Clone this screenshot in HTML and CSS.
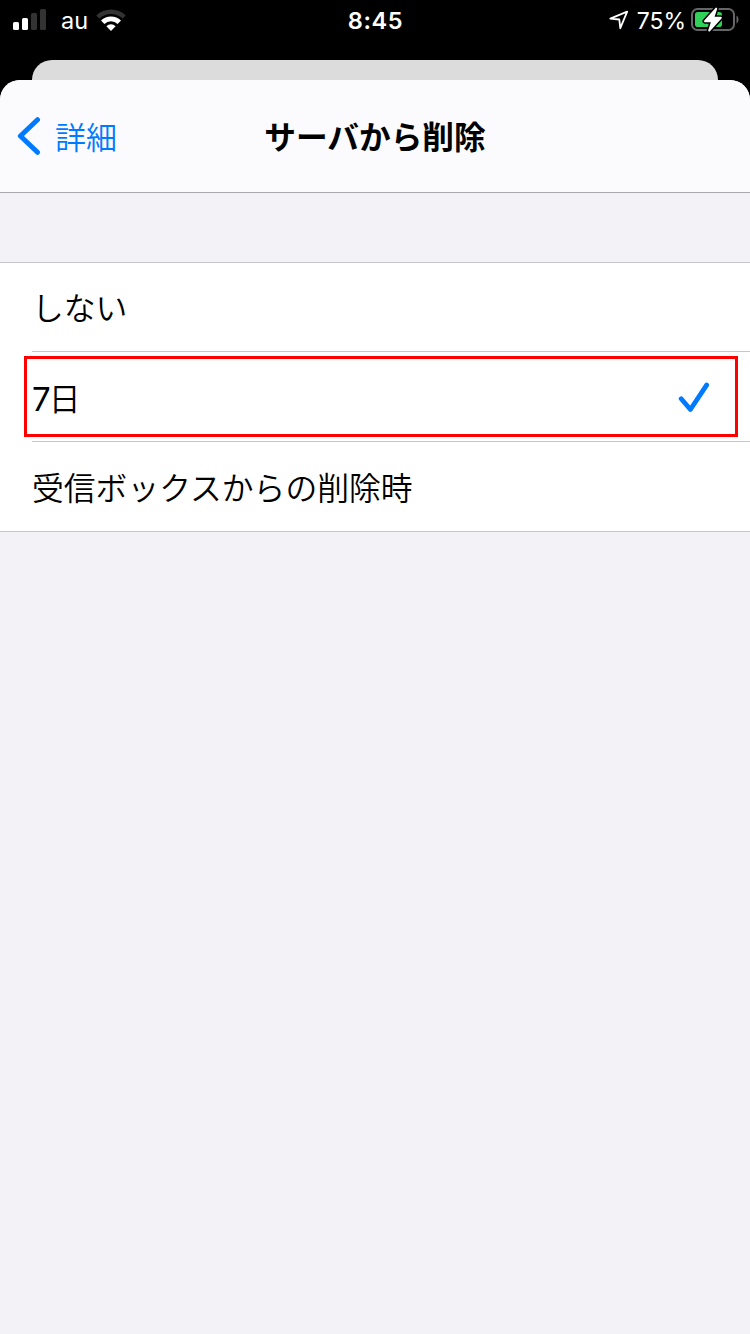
FILE: index.html
```html
<!DOCTYPE html>
<html lang="ja">
  <head>
    <meta charset="UTF-8" />
    <meta name="viewport" content="width=device-width, initial-scale=1.0" />
    <title>サーバから削除</title>
    <link rel="stylesheet" href="styles.css">
  </head>
  <body>
    <div class="status-bar">
      <div class="status-left">
        <svg class="signal" width="34" height="22" viewBox="0 0 34 22">
          <rect x="0" y="13" width="6" height="8" rx="1.5" fill="#fff" />
          <rect x="9" y="9" width="6" height="12" rx="1.5" fill="#fff" />
          <rect x="18" y="4" width="6" height="17" rx="1.5" fill="#333" />
          <rect x="27" y="0" width="6" height="21" rx="1.5" fill="#333" />
        </svg>
        <span class="carrier">au</span>
        <svg class="wifi" width="30" height="22" viewBox="0 0 30 22">
          <path d="M0.3 6.4a21.5 21.5 0 0 1 29.4 0L26.6 9.5a17 17 0 0 0-23.2 0z" fill="#333" />
          <path d="M5 11.5a14.6 14.6 0 0 1 20 0L21.6 14.9a9.6 9.6 0 0 0-13.2 0z" fill="#fff" />
          <path d="M10.4 17.2a6.6 6.6 0 0 1 9.2 0L15 22z" fill="#fff" />
        </svg>
      </div>
      <div class="time">8:45</div>
      <div class="status-right">
        <svg class="location" width="20" height="20" viewBox="0 0 20 20">
          <path d="M1.3 8.7L18.2 1.6L11.3 18.2L10.3 9.5z" fill="none" stroke="#fff" stroke-width="1.8" stroke-linejoin="round" />
        </svg>
        <span class="percent">75%</span>
        <svg class="battery" width="48" height="26" viewBox="0 0 48 26">
          <rect x="1" y="2" width="42" height="21" rx="5.5" fill="none" stroke="#666" stroke-width="2" />
          <path d="M45.5 8.5c2.6 1.2 2.6 6.8 0 8z" fill="#666" />
          <rect x="4" y="5" width="27" height="15" rx="2.8" fill="#30d158" />
          <path d="M25.2 1.6L14 14.2h7.2L18.2 23.6L29.8 10.8h-7.6z" fill="#fff" stroke="#000" stroke-width="5" paint-order="stroke" stroke-linejoin="round" />
          <path d="M25.2 1.6L14 14.2h7.2L18.2 23.6L29.8 10.8h-7.6z" fill="#fff" stroke="#fff" stroke-width="2" stroke-linejoin="round" />
        </svg>
      </div>
    </div>

    <div class="back-sheet"></div>

    <div class="sheet">
      <div class="navbar">
        <a class="back">
          <svg width="24" height="40" viewBox="0 0 24 40">
            <path d="M20.5 3.7L3.4 20L20.5 36.3" fill="none" stroke="#007aff" stroke-width="5" stroke-linecap="round" stroke-linejoin="round" />
          </svg>
          <span class="back-label">詳細</span>
        </a>
        <h1>サーバから削除</h1>
      </div>

      <ul class="options">
        <li class="option"><span class="label">しない</span></li>
        <li class="option selected">
          <span class="label"><span class="number">7</span>日</span>
          <svg class="check" width="32" height="32" viewBox="0 0 32 32">
            <path d="M3.2 17.8L12.4 28.5L28.6 4.1" fill="none" stroke="#007aff" stroke-width="4.8" stroke-linecap="round" stroke-linejoin="round" />
          </svg>
          <div class="highlight"></div>
        </li>
        <li class="option"><span class="label">受信ボックスからの削除時</span></li>
      </ul>
    </div>
  </body>
</html>
```
FILE: styles.css
```css
* {
  box-sizing: border-box;
}

body {
  margin: 0;
  height: 1334px;
  display: flex;
  flex-direction: column;
  background-color: #000;
  color: #000;
  font-family: Inter, "Noto Sans CJK JP", sans-serif;
  overflow: hidden;
}

.status-bar {
  display: grid;
  grid-template-columns: 1fr auto 1fr;
  height: 60px;
  padding: 1px 12px 19px 13px;
  align-items: center;
  color: #fff;
  font-size: 24px;
  line-height: 40px;
}

.status-left,
.status-right {
  display: flex;
  align-items: center;
}

.signal {
  margin-bottom: 2px;
}

.carrier {
  margin-left: 14px;
  font-size: 23.5px;
}

.wifi {
  margin: 0 0 2px 8px;
}

.time {
  font-size: 23.5px;
  font-weight: 600;
  letter-spacing: 0.6px;
}

.status-right {
  justify-content: flex-end;
}

.location {
  margin-bottom: 2px;
}

.percent {
  margin: 0 5px 0 8px;
  font-size: 23px;
}

.battery {
  margin: 0 -1px 3px 0;
}

.back-sheet {
  height: 20px;
  margin: 0 32px;
  border-radius: 20px 20px 0 0;
  background-color: #dcdcdc;
}

.sheet {
  flex: 1;
  border-radius: 20px 20px 0 0;
  background-color: #f2f2f7;
  overflow: hidden;
}

.navbar {
  display: grid;
  grid-template-columns: 1fr auto 1fr;
  align-items: center;
  height: 113px;
  padding: 0 17px;
  background-color: #fbfbfd;
  border-bottom: 1px solid #a9a9ad;
}

.back {
  display: flex;
  align-items: center;
  gap: 14px;
  color: #007aff;
  font-size: 31px;
  font-weight: 350;
}

.back-label {
  padding-bottom: 2px;
}

h1 {
  margin: 0;
  padding-bottom: 3px;
  font-size: 31.7px;
  font-weight: 700;
}

.options {
  list-style: none;
  margin: 69px 0 0;
  padding: 0 0 0 32px;
  background-color: #fff;
  border-top: 1px solid #c7c7cb;
  border-bottom: 1px solid #c7c7cb;
}

.option {
  position: relative;
  display: flex;
  align-items: center;
  justify-content: space-between;
  height: 90px;
  padding-right: 40px;
  border-bottom: 1px solid #c7c7cb;
  font-size: 31.8px;
  font-weight: 350;
}

.option:first-child {
  height: 89px;
}

.option:last-child {
  height: 89px;
  border-bottom: none;
}

.label {
  padding-bottom: 2px;
}

.selected .label {
  padding-bottom: 0;
}

.number {
  margin-right: -2px;
  font-size: 33px;
  font-weight: 400;
}

/* red frame drawn over the selected row */
.highlight {
  position: absolute;
  top: 4px;
  right: 12px;
  bottom: 4px;
  left: -8px;
  border: 3px solid #f00;
}
```
